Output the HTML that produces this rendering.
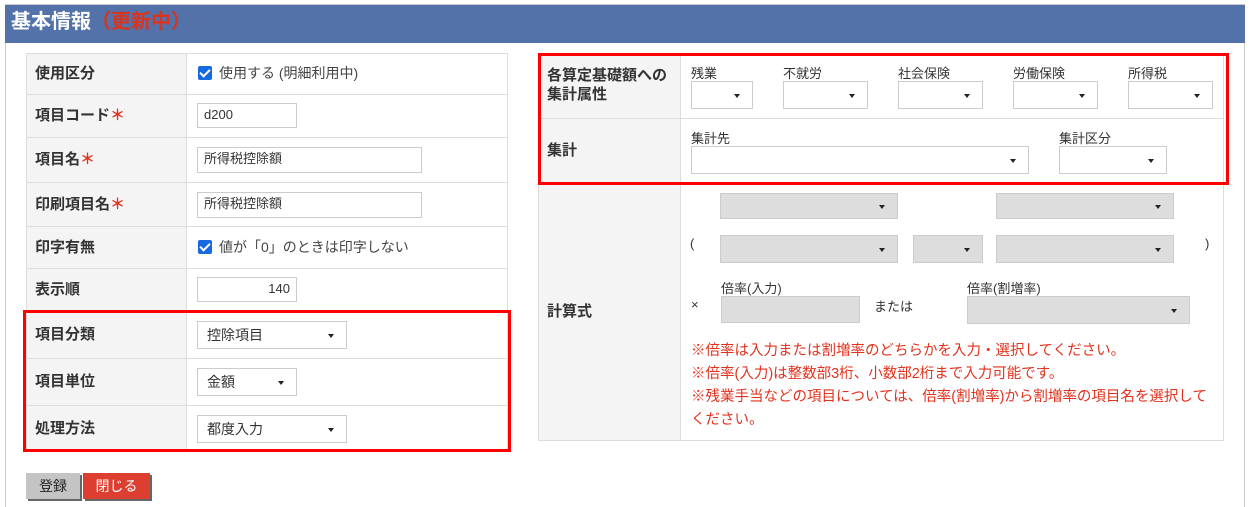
<!DOCTYPE html>
<html style="overflow:hidden"><head><meta charset="utf-8"><style>
*{box-sizing:border-box;margin:0;padding:0}
html,body{width:1250px;height:507px;overflow:hidden}
body{background:#fff;position:relative;font-family:"Liberation Sans","Noto Sans CJK JP",sans-serif;color:#333;font-size:14px}
.a{position:absolute}
.panel{left:5px;top:4px;width:1240px;height:520px;border:1px solid #ccc;border-top:none;border-bottom:none}
.hdr{left:5px;top:4px;width:1240px;height:39px;background:#5272a9;border-top:1px solid #ccc;color:#fff;font-weight:bold;font-size:20px;line-height:34px;padding-left:6px}
.hdr span{color:#d8341e}
.lab{background:#f4f4f4;border:1px solid #ddd;font-weight:bold;font-size:15px;padding-left:8px;display:flex;align-items:center;padding-bottom:3px}
.val{border:1px solid #ddd;background:#fff}
.star{color:#e2321e;font-weight:bold}
.inp{background:#fff;border:1px solid #ccc;font-size:13px;padding-left:6px;line-height:22px}
.sel{background:#fff;border:1px solid #ccc;font-size:14px;padding-left:9px;line-height:26px}
.sel:after{content:"";position:absolute;right:12px;top:50%;margin-top:-1px;border-left:3px solid transparent;border-right:3px solid transparent;border-top:4px solid #222}
.g{background:#ddd;border-color:#ccc}
.cb{width:14px;height:14px;background:#1769e0;border-radius:2px}
.cb:after{content:"";position:absolute;left:4px;top:1px;width:4px;height:8px;border:solid #fff;border-width:0 2px 2px 0;transform:rotate(45deg)}
.red{border:3px solid #f00}
.sm{font-size:13px}
.note{color:#e2321e;font-size:14.5px;line-height:23px}
</style></head><body>
<div class="a panel"></div>
<div class="a hdr">基本情報<span>（更新中）</span></div>

<div class="a lab" style="left:26px;top:53px;width:161px;height:42px">使用区分</div>
<div class="a val" style="left:186px;top:53px;width:322px;height:42px"></div>
<div class="a lab" style="left:26px;top:94px;width:161px;height:44px">項目コード<span class="star">＊</span></div>
<div class="a val" style="left:186px;top:94px;width:322px;height:44px"></div>
<div class="a lab" style="left:26px;top:137px;width:161px;height:46px">項目名<span class="star">＊</span></div>
<div class="a val" style="left:186px;top:137px;width:322px;height:46px"></div>
<div class="a lab" style="left:26px;top:182px;width:161px;height:45px">印刷項目名<span class="star">＊</span></div>
<div class="a val" style="left:186px;top:182px;width:322px;height:45px"></div>
<div class="a lab" style="left:26px;top:226px;width:161px;height:43px">印字有無</div>
<div class="a val" style="left:186px;top:226px;width:322px;height:43px"></div>
<div class="a lab" style="left:26px;top:268px;width:161px;height:44px">表示順</div>
<div class="a val" style="left:186px;top:268px;width:322px;height:44px"></div>
<div class="a lab" style="left:26px;top:311px;width:161px;height:48px">項目分類</div>
<div class="a val" style="left:186px;top:311px;width:322px;height:48px"></div>
<div class="a lab" style="left:26px;top:358px;width:161px;height:48px">項目単位</div>
<div class="a val" style="left:186px;top:358px;width:322px;height:48px"></div>
<div class="a lab" style="left:26px;top:405px;width:161px;height:47px">処理方法</div>
<div class="a val" style="left:186px;top:405px;width:322px;height:47px"></div>

<div class="a cb" style="left:198px;top:66px"></div>
<div class="a" style="left:219px;top:63px;font-size:14px;color:#444">使用する (明細利用中)</div>
<div class="a inp" style="left:197px;top:103px;width:100px;height:25px">d200</div>
<div class="a inp" style="left:197px;top:147px;width:225px;height:26px">所得税控除額</div>
<div class="a inp" style="left:197px;top:192px;width:225px;height:26px">所得税控除額</div>
<div class="a cb" style="left:198px;top:240px"></div>
<div class="a" style="left:219px;top:237px;font-size:14px;color:#444">値が「0」のときは印字しない</div>
<div class="a inp" style="left:197px;top:277px;width:100px;height:25px;text-align:right;padding-right:6px">140</div>
<div class="a sel" style="left:197px;top:321px;width:150px;height:28px">控除項目</div>
<div class="a sel" style="left:197px;top:368px;width:100px;height:28px">金額</div>
<div class="a sel" style="left:197px;top:415px;width:150px;height:28px">都度入力</div>
<div class="a red" style="left:23px;top:310px;width:488px;height:142px"></div>

<div class="a" style="left:26px;top:473px;width:54px;height:26px;background:#c4c4c4;box-shadow:2px 2px 0 #666;font-size:14px;text-align:center;line-height:26px;color:#222">登録</div>
<div class="a" style="left:83px;top:473px;width:67px;height:26px;background:#dc3e30;box-shadow:2px 2px 0 #666;font-size:14px;text-align:center;line-height:26px;color:#fff">閉じる</div>

<div class="a lab" style="left:538px;top:54px;width:143px;height:65px;line-height:19px">各算定基礎額への<br>集計属性</div>
<div class="a val" style="left:680px;top:54px;width:544px;height:65px"></div>
<div class="a lab" style="left:538px;top:118px;width:143px;height:66px">集計</div>
<div class="a val" style="left:680px;top:118px;width:544px;height:66px"></div>
<div class="a lab" style="left:538px;top:183px;width:143px;height:258px">計算式</div>
<div class="a val" style="left:680px;top:183px;width:544px;height:258px"></div>

<div class="a sm" style="left:691px;top:63px">残業</div>
<div class="a sm" style="left:783px;top:63px">不就労</div>
<div class="a sm" style="left:898px;top:63px">社会保険</div>
<div class="a sm" style="left:1013px;top:63px">労働保険</div>
<div class="a sm" style="left:1128px;top:63px">所得税</div>
<div class="a sel" style="left:691px;top:81px;width:62px;height:28px"></div>
<div class="a sel" style="left:783px;top:81px;width:85px;height:28px"></div>
<div class="a sel" style="left:898px;top:81px;width:85px;height:28px"></div>
<div class="a sel" style="left:1013px;top:81px;width:85px;height:28px"></div>
<div class="a sel" style="left:1128px;top:81px;width:85px;height:28px"></div>
<div class="a sm" style="left:691px;top:128px">集計先</div>
<div class="a sm" style="left:1059px;top:128px">集計区分</div>
<div class="a sel" style="left:691px;top:146px;width:338px;height:28px"></div>
<div class="a sel" style="left:1059px;top:146px;width:108px;height:28px"></div>
<div class="a red" style="left:538px;top:53px;width:691px;height:132px"></div>

<div class="a sel g" style="left:720px;top:193px;width:178px;height:26px"></div>
<div class="a sel g" style="left:996px;top:193px;width:178px;height:26px"></div>
<div class="a sm" style="left:690px;top:236px">(</div>
<div class="a sel g" style="left:720px;top:235px;width:178px;height:28px"></div>
<div class="a sel g" style="left:913px;top:235px;width:70px;height:28px"></div>
<div class="a sel g" style="left:996px;top:235px;width:178px;height:28px"></div>
<div class="a sm" style="left:1205px;top:236px">)</div>
<div class="a sm" style="left:721px;top:278px">倍率(入力)</div>
<div class="a sm" style="left:967px;top:278px">倍率(割増率)</div>
<div class="a sm" style="left:691px;top:297px">×</div>
<div class="a inp g" style="left:721px;top:296px;width:139px;height:27px"></div>
<div class="a sm" style="left:874px;top:296px">または</div>
<div class="a sel g" style="left:967px;top:296px;width:223px;height:28px"></div>
<div class="a note" style="left:691px;top:340px;width:530px">※倍率は入力または割増率のどちらかを入力・選択してください。<br>※倍率(入力)は整数部3桁、小数部2桁まで入力可能です。<br>※残業手当などの項目については、倍率(割増率)から割増率の項目名を選択して<br>ください。</div>
</body></html>
